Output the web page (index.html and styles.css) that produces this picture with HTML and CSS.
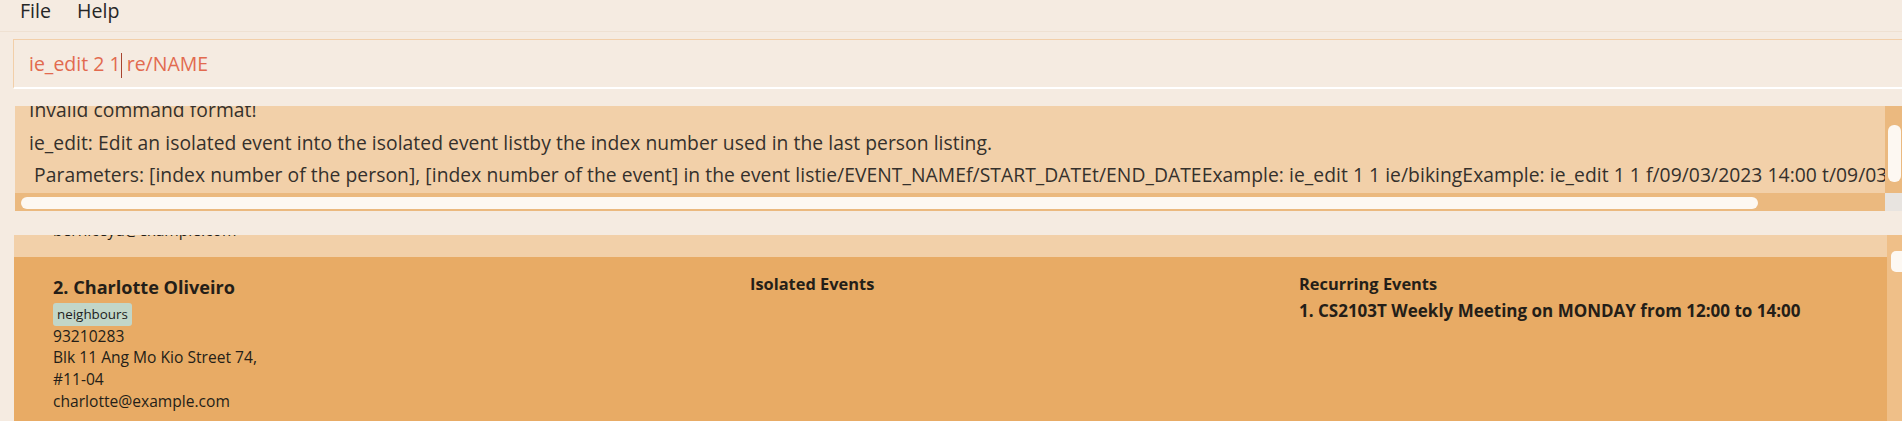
FILE: index.html
```html
<!DOCTYPE html>
<html lang="en">
<head>
<meta charset="utf-8">
<title>Address App</title>
<link rel="stylesheet" href="styles.css">
</head>
<body>
<div class="app">
  <nav class="menubar">
    <span class="menu-item">File</span>
    <span class="menu-item">Help</span>
  </nav>

  <div class="command-pane">
    <div class="command-box">
      <span class="cmd-text">ie_edit 2 1</span><span class="caret"></span><span class="cmd-text"> re/NAME</span>
    </div>
  </div>

  <div class="result-pane">
    <div class="result-box">
      <div class="result-main">
        <div class="result-view">
          <div class="result-text">
            <div class="result-line">Invalid command format!</div>
            <div class="result-line">ie_edit: Edit an isolated event into the isolated event listby the index number used in the last person listing.</div>
            <div class="result-line"> Parameters: [index number of the person], [index number of the event] in the event listie/EVENT_NAMEf/START_DATEt/END_DATEExample: ie_edit 1 1 ie/bikingExample: ie_edit 1 1 f/09/03/2023 14:00 t/09/03/2023 15:00</div>
          </div>
        </div>
        <div class="vscroll"><div class="vthumb"></div></div>
      </div>
      <div class="hscroll-row">
        <div class="htrack"><div class="hthumb"></div></div>
        <div class="corner"></div>
      </div>
    </div>
  </div>

  <div class="list-pane">
    <div class="list-view">
      <div class="list-inner">
        <div class="card card-light">
          <div class="person person-tail">
            <div class="detail">berniceyu@example.com</div>
          </div>
        </div>
        <div class="card card-dark">
          <div class="person">
            <div class="name">2. Charlotte Oliveiro</div>
            <div class="tags"><span class="tag">neighbours</span></div>
            <div class="detail">93210283</div>
            <div class="detail address">Blk 11 Ang Mo Kio Street 74, #11-04</div>
            <div class="detail">charlotte@example.com</div>
          </div>
          <div class="events">
            <div class="events-title">Isolated Events</div>
          </div>
          <div class="events">
            <div class="events-title">Recurring Events</div>
            <div class="event-item">1. CS2103T Weekly Meeting on MONDAY from 12:00 to 14:00</div>
          </div>
        </div>
      </div>
    </div>
    <div class="list-scroll"><div class="list-thumb"></div></div>
  </div>
</div>
</body>
</html>
```
FILE: styles.css
```css
* { box-sizing: border-box; }

html, body {
  margin: 0;
  padding: 0;
  background: #f5ebe1;
}

body {
  font-family: "Open Sans", "Noto Sans", sans-serif;
  color: #2b2622;
  width: 1902px;
  height: 421px;
  overflow: hidden;
}

.app {
  display: flex;
  flex-direction: column;
  height: 421px;
}

/* ---------- menu bar ---------- */
.menubar {
  display: flex;
  gap: 26px;
  height: 32px;
  padding: 0 0 0 20px;
  border-bottom: 1px solid #efe1d2;
  font-size: 19.6px;
  line-height: 21px;
  color: #262626;
}

.menu-item {
  display: block;
}

/* ---------- command box ---------- */
.command-pane {
  padding: 7px 0 0 13px;
}

.command-box {
  display: flex;
  align-items: flex-start;
  height: 50px;
  padding: 11px 0 0 15px;
  border-top: 1px solid #f2cfa9;
  border-left: 1px solid #f2cfa9;
  border-bottom: 2px solid #ffffff;
  background: #f5ebe1;
  font-size: 19.5px;
  line-height: 26px;
  color: #e26a4f;
}

.cmd-text {
  white-space: pre;
}

.caret {
  width: 1px;
  height: 25px;
  margin-top: 2px;
  background: #a8442f;
}

/* ---------- result display ---------- */
.result-pane {
  padding: 17px 0 0 15px;
}

.result-box {
  display: flex;
  flex-direction: column;
  height: 105px;
}

.result-main {
  display: flex;
  height: 87px;
}

.result-view {
  width: 1870px;
  height: 87px;
  overflow: hidden;
  background: #f2d0a9;
}

.result-text {
  margin-top: -12px;
  padding-left: 14px;
  font-size: 19.3px;
  line-height: 32.5px;
  letter-spacing: 0.05px;
  color: #35302c;
}

.result-line {
  white-space: pre;
}

.vscroll {
  width: 17px;
  height: 87px;
  padding: 19px 1px 0 3px;
  background: #ebb97f;
}

.vthumb {
  height: 57px;
  border-radius: 6px;
  background: #fdf8f2;
}

.hscroll-row {
  display: flex;
  height: 18px;
}

.htrack {
  width: 1870px;
  height: 18px;
  padding: 4px 0 0 6px;
  background: #ebb97f;
}

.hthumb {
  width: 1737px;
  height: 12px;
  border-radius: 6px;
  background: #fdf8f2;
}

.corner {
  width: 17px;
  height: 18px;
  background: #e8e4e0;
}

/* ---------- person list ---------- */
.list-pane {
  display: flex;
  margin: 24px 0 0 14px;
  flex: 1;
  min-height: 0;
}

.list-view {
  width: 1873px;
  overflow: hidden;
}

.list-inner {
  margin-top: -15px;
}

.card {
  display: grid;
  grid-template-columns: 697px 549px 1fr;
  padding: 0 0 15px 39px;
  color: #241e18;
}

.card-light { background: #f2d0a9; }
.card-dark  { background: #e8ab65; }

.person {
  padding-top: 17px;
}

.person-tail {
  padding-top: 0;
}

.name {
  font-size: 18.1px;
  font-weight: 700;
  line-height: 26px;
}

.tags {
  display: flex;
  gap: 5px;
  margin-top: 3px;
}

.tag {
  display: block;
  height: 23px;
  padding: 2px 4px 0;
  border-radius: 3px;
  background: #c2d6c8;
  font-size: 13.4px;
  line-height: 19px;
  color: #1d1d1d;
}

.detail {
  font-size: 15.6px;
  line-height: 21.7px;
}

.address {
  max-width: 230px;
}

.events {
  padding-top: 15px;
}

.events-title {
  font-size: 16.4px;
  font-weight: 700;
  line-height: 24px;
}

.event-item {
  margin-top: 3px;
  font-size: 17px;
  font-weight: 700;
  line-height: 24px;
}

.list-scroll {
  width: 15px;
  padding: 16px 0 0 4px;
  background: #efbf88;
}

.list-thumb {
  height: 21px;
  border-radius: 5px 0 0 5px;
  background: #fdf8f2;
}
```
